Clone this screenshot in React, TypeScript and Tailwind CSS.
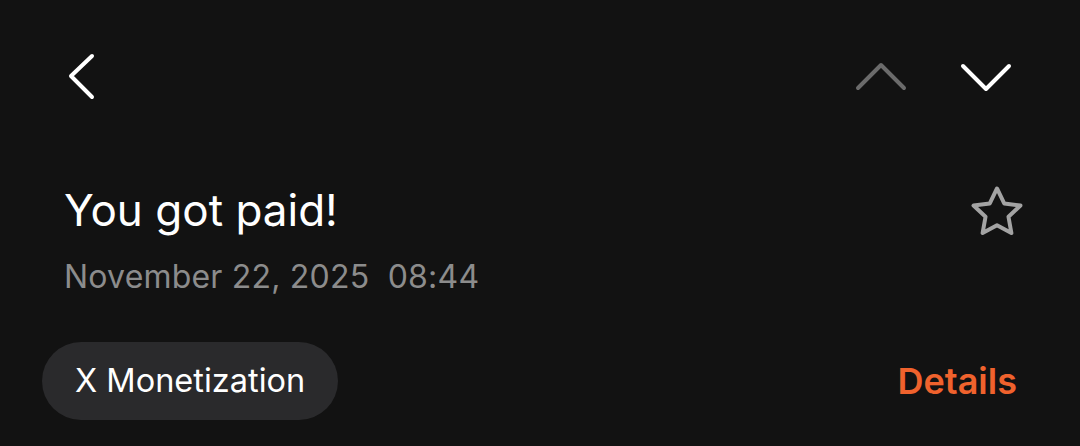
export default function App() {
  return (
    <div className="w-[1080px] h-[446px] bg-[#121212] overflow-hidden font-['Inter',sans-serif] text-white">
      {/* Top bar */}
      <div className="flex items-center justify-between h-[154px] pl-[66px] pr-[68px]">
        <svg width="30" height="50" viewBox="0 0 30 50" fill="none" className="-mt-[2px]">
          <path d="M26 5 L5 25 L26 46" stroke="#ffffff" strokeWidth="4" strokeLinecap="round" strokeLinejoin="round" />
        </svg>
        <div className="flex items-center gap-[53px]">
          <svg width="52" height="30" viewBox="0 0 52 30" fill="none">
            <path d="M3 26 L26 3 L49 26" stroke="#6b6b6b" strokeWidth="4" strokeLinecap="round" strokeLinejoin="round" />
          </svg>
          <svg width="52" height="30" viewBox="0 0 52 30" fill="none">
            <path d="M3 4 L26 27 L49 4" stroke="#ffffff" strokeWidth="4" strokeLinecap="round" strokeLinejoin="round" />
          </svg>
        </div>
      </div>

      {/* Title */}
      <div className="flex items-start justify-between pl-[64px] pr-[51px] mt-[30px]">
        <div>
          <h1 className="text-[44px] leading-[52px] font-normal">You got paid!</h1>
          <p className="mt-[21px] text-[32px] leading-[40px] tracking-[0.2px] text-[#8c8c8c]">November 22, 2025&nbsp;&nbsp;08:44</p>
        </div>
        <svg width="64" height="64" viewBox="0 0 24 24" fill="none" className="-mt-[3px]">
          <path
            d="M12 2.8l2.7 5.6 6.1.8-4.5 4.2 1.1 6.1L12 16.6l-5.4 2.9 1.1-6.1-4.5-4.2 6.1-.8z"
            stroke="#a3a3a3"
            strokeWidth="1.5"
            strokeLinejoin="round"
          />
        </svg>
      </div>

      {/* Actions */}
      <div className="flex items-center justify-between pl-[42px] pr-[63px] mt-[45px]">
        <div className="h-[78px] px-[33px] rounded-full bg-[#2a2a2c] flex items-center">
          <span className="text-[32.5px] leading-none">X Monetization</span>
        </div>
        <span className="text-[36px] font-semibold text-[#f0622d]">Details</span>
      </div>
    </div>
  );
}
